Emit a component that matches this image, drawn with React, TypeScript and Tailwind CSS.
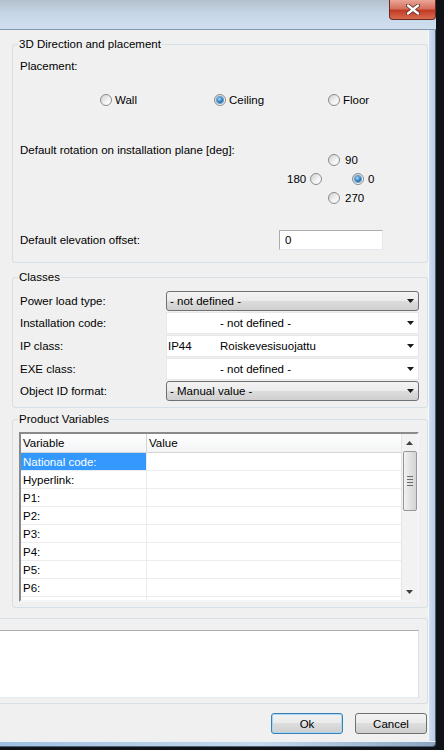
import type { ReactNode } from 'react'

function Radio({ checked }: { checked?: boolean }) {
  return (
    <span className="inline-flex h-[12px] w-[12px] shrink-0 items-center justify-center rounded-full border border-[#8c8c8c] bg-[linear-gradient(135deg,#cfcfcf,#f4f4f4_60%,#ffffff)]">
      {checked && (
        <span className="h-[6px] w-[6px] rounded-full bg-[radial-gradient(circle_at_40%_35%,#a6dcff,#2b78b9_55%,#0c3f6c)] shadow-[0_0_0_1px_#5f9fd0]" />
      )}
    </span>
  )
}

function Arrow() {
  return (
    <svg width="7" height="4" viewBox="0 0 7 4" className="shrink-0">
      <path d="M0 0h7L3.5 4z" fill="#1a1a1a" />
    </svg>
  )
}

function GrayCombo({ text }: { text: string }) {
  return (
    <div className="flex h-[20px] w-[253px] items-center rounded-[3px] border border-[#707070] bg-[linear-gradient(#f3f3f3_0%,#ebebeb_50%,#dddddd_50%,#cfcfcf_100%)] pl-[3px] pr-[4px]">
      <span className="flex-1">{text}</span>
      <Arrow />
    </div>
  )
}

function WhiteCombo({ code = '', text }: { code?: string; text: string }) {
  return (
    <div className="flex h-[22px] w-[253px] items-center border border-[#e8e8e8] bg-white pr-[4px]">
      <span className="w-[53px] pl-[1px]">{code}</span>
      <span className="flex-1">{text}</span>
      <Arrow />
    </div>
  )
}

function Group({ title, children, className = '' }: { title: string; children: ReactNode; className?: string }) {
  return (
    <div className={`ml-[12px] w-[416px] rounded-[3px] border border-[#d5dfe5] ${className}`}>
      <span className="-mt-[8px] ml-[5px] block w-fit bg-[#f0f0f0] px-[1px]">{title}</span>
      {children}
    </div>
  )
}

const classRows: { label: string; el: ReactNode }[] = [
  { label: 'Power load type:', el: <GrayCombo text="- not defined -" /> },
  { label: 'Installation code:', el: <WhiteCombo text="- not defined -" /> },
  { label: 'IP class:', el: <WhiteCombo code="IP44" text="Roiskevesisuojattu" /> },
  { label: 'EXE class:', el: <WhiteCombo text="- not defined -" /> },
  { label: 'Object ID format:', el: <GrayCombo text="- Manual value -" /> },
]

// last row is only partly visible, like in the dialog
const variables = ['National code:', 'Hyperlink:', 'P1:', 'P2:', 'P3:', 'P4:', 'P5:', 'P6:', '']

export default function App() {
  return (
    <div className="h-[750px] w-[444px] overflow-hidden bg-[#0e1216] font-['Liberation_Sans',Arial,sans-serif] text-[11.5px] leading-[14px] text-black">
      <div className="flex w-[436px] flex-col">
        {/* Title bar */}
        <div className="flex h-[30px] justify-end rounded-tr-[6px] border-b border-[#8297ad] bg-[linear-gradient(#b3bfcb,#c6d6e7_45%,#cfdfef)]">
          <div className="flex h-[20px] w-[47px] items-center justify-center rounded-b-[4px] border border-t-0 border-[#6b2b22] bg-[linear-gradient(#eaa598,#d5705c_45%,#c13b25_55%,#d86a4f)]">
            <svg width="14" height="11" viewBox="0 0 14 11">
              <path d="M2 1.5l10 8M12 1.5l-10 8" stroke="#5a2a22" strokeWidth="4" strokeLinecap="round" />
              <path d="M2 1.5l10 8M12 1.5l-10 8" stroke="#ffffff" strokeWidth="2.4" strokeLinecap="round" />
            </svg>
          </div>
        </div>

        <div className="flex">
          {/* Client area */}
          <div className="flex h-[711px] w-[428px] flex-col bg-[#f0f0f0]">
            {/* 3D Direction and placement */}
            <Group title="3D Direction and placement" className="mt-[14px] pb-[12px]">
              <div className="mt-[8px] pl-[7px]">Placement:</div>
              <div className="mt-[20px] flex pl-[87px]">
                <label className="flex w-[114px] items-center gap-[3px]"><Radio />Wall</label>
                <label className="flex w-[114px] items-center gap-[3px]"><Radio checked />Ceiling</label>
                <label className="flex items-center gap-[3px]"><Radio />Floor</label>
              </div>
              <div className="mt-[36px] flex pl-[7px]">
                <span className="w-[267px]">Default rotation on installation plane [deg]:</span>
                <div className="mt-[7px] grid grid-cols-[41px_24px_auto] grid-rows-[19px_19px_19px] items-center">
                  <label className="col-span-2 col-start-2 flex items-center gap-[5px]"><Radio />90</label>
                  <label className="col-start-1 row-start-2 flex items-center gap-[4px]">180<Radio /></label>
                  <label className="col-start-3 row-start-2 flex items-center gap-[4px]"><Radio checked />0</label>
                  <label className="col-span-2 col-start-2 row-start-3 flex items-center gap-[5px]"><Radio />270</label>
                </div>
              </div>
              <div className="mt-[23px] flex items-center pl-[7px]">
                <span className="w-[259px]">Default elevation offset:</span>
                <div className="flex h-[20px] w-[104px] items-center border border-[#abadb3] border-b-[#e3e9ef] border-r-[#e3e9ef] bg-white pl-[5px]">0</div>
              </div>
            </Group>

            {/* Classes */}
            <Group title="Classes" className="mt-[14px] pb-[6px]">
              <div className="mt-[7px] flex flex-col gap-[1px] pl-[7px]">
                {classRows.map(r => (
                  <div key={r.label} className="flex items-center">
                    <span className="w-[146px]">{r.label}</span>
                    {r.el}
                  </div>
                ))}
              </div>
            </Group>

            {/* Product Variables */}
            <Group title="Product Variables" className="mt-[11px] pb-[5px]">
              <div className="ml-[6px] mt-[6px] flex h-[170px] w-[400px] border-2 border-[#8a8a8a] border-b-[#f4f4f4] border-r-[#f4f4f4]">
                <div className="flex-1 overflow-hidden bg-white">
                  <div className="flex h-[19px] items-center border-b border-[#d5d5d5] bg-[linear-gradient(#ffffff,#f3f4f6)]">
                    <span className="flex h-full w-[126px] items-center border-r border-[#d5d5d5] pl-[2px]">Variable</span>
                    <span className="pl-[2px]">Value</span>
                  </div>
                  {variables.map((v, i) => (
                    <div key={i} className="flex h-[18px] border-b border-[#ececec]">
                      <span className={`flex w-[126px] items-center border-r border-[#ececec] pl-[2px] ${i === 0 ? 'bg-[#3399ff] text-white' : ''}`}>{v}</span>
                      <span className="flex-1" />
                    </div>
                  ))}
                </div>
                <div className="flex w-[16px] flex-col items-center border-l border-[#e4e4e4] bg-[#f2f2f2]">
                  <div className="flex h-[17px] items-center justify-center">
                    <svg width="7" height="4" viewBox="0 0 7 4"><path d="M3.5 0L7 4H0z" fill="#404040" /></svg>
                  </div>
                  <div className="flex h-[60px] w-[14px] flex-col items-center justify-center gap-[2px] rounded-[2px] border border-[#979797] bg-[linear-gradient(90deg,#f2f2f2,#e2e2e2_50%,#d4d4d4)]">
                    <span className="h-[1px] w-[6px] bg-[#6a6a6a]" />
                    <span className="h-[1px] w-[6px] bg-[#6a6a6a]" />
                    <span className="h-[1px] w-[6px] bg-[#6a6a6a]" />
                    <span className="h-[1px] w-[6px] bg-[#6a6a6a]" />
                  </div>
                  <div className="flex-1" />
                  <div className="flex h-[17px] items-center justify-center">
                    <svg width="7" height="4" viewBox="0 0 7 4"><path d="M0 0h7L3.5 4z" fill="#404040" /></svg>
                  </div>
                </div>
              </div>
            </Group>

            {/* Bottom text panel */}
            <div className="mt-[10px] h-[86px] w-[428px] rounded-r-[3px] border border-l-0 border-[#d5dfe5] pt-[11px]">
              <div className="h-[68px] w-[419px] border border-l-0 border-[#abadb3] border-b-[#e3e9ef] border-r-[#dbdfe6] bg-white" />
            </div>

            {/* Buttons */}
            <div className="mt-[9px] flex justify-end gap-[12px] pr-[1px]">
              <button className="h-[21px] w-[72px] rounded-[3px] border border-[#3c7fb1] bg-[linear-gradient(#f2f2f2_0%,#ebebeb_50%,#dddddd_50%,#cfcfcf_100%)] shadow-[inset_0_0_0_1px_#a6d8f5]">Ok</button>
              <button className="h-[21px] w-[72px] rounded-[3px] border border-[#707070] bg-[linear-gradient(#f2f2f2_0%,#ebebeb_50%,#dddddd_50%,#cfcfcf_100%)]">Cancel</button>
            </div>
          </div>

          {/* Right frame */}
          <div className="w-[8px] border-l border-r border-l-[#f4f8fc] border-r-[#4d5f73] bg-[linear-gradient(90deg,#cfdff0,#b7cbe2)]" />
        </div>

        {/* Bottom frame */}
        <div className="h-[6px] rounded-br-[4px] border-b border-r border-[#4d5f73] border-t border-t-[#e8f0f8] bg-[linear-gradient(90deg,#9fc0e0,#c6d8ec_60%,#8aa6c2)]" />
      </div>
    </div>
  )
}
